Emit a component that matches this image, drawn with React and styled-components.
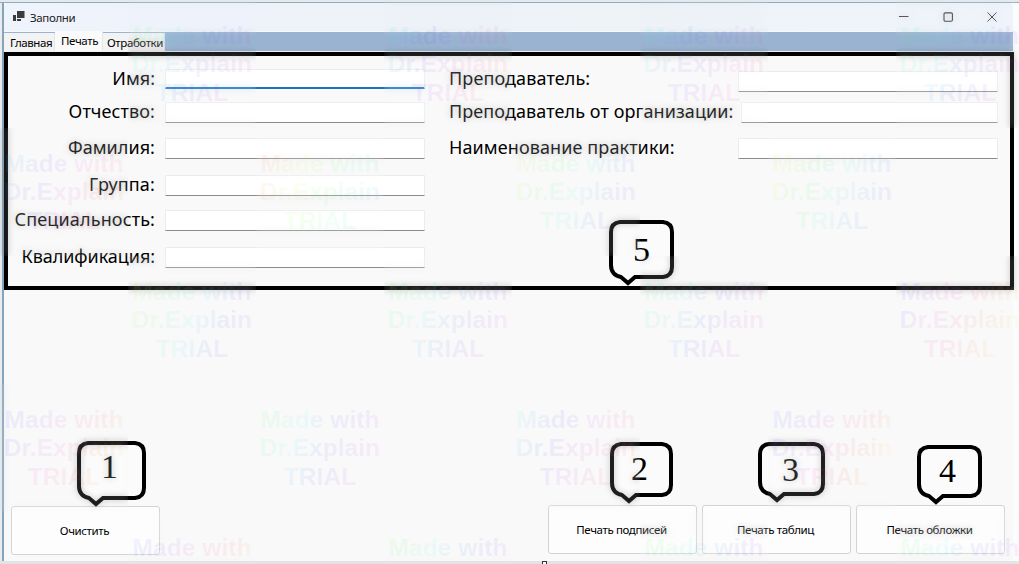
import React from 'react';
import styled, { createGlobalStyle } from 'styled-components';

const GlobalStyle = createGlobalStyle`
  * { box-sizing: border-box; }
  html, body { margin: 0; padding: 0; overflow: hidden; }
`;

const Desktop = styled.div`
  position: relative;
  width: 1019px;
  height: 564px;
  overflow: hidden;
  padding: 3px 6px 0 4px;
  background: linear-gradient(90deg, #e9ebec 0 2px, #86a5bc 2px 4px, #fdfdfd 4px);
  font-family: "Noto Sans", "Open Sans", sans-serif;
  color: #000;
`;

const TopEdge = styled.div`
  position: absolute;
  left: 0;
  top: 0;
  width: 1019px;
  height: 3px;
  background: linear-gradient(180deg, #e6e9eb 0 2px, #8fabc0 2px 3px);
`;

const BottomEdge = styled.div`
  position: absolute;
  left: 0;
  top: 561px;
  width: 1019px;
  height: 3px;
  background: #e3e3e3;
`;

const ResizeHandle = styled.div`
  position: absolute;
  left: 542px;
  top: 561px;
  width: 5px;
  height: 5px;
  border: 1px solid #333;
  background: #fff;
`;

const Window = styled.main`
  display: flex;
  flex-direction: column;
  width: 1009px;
  height: 558px;
  background: #f9f9f9;
  border-radius: 5px 5px 0 0;
  overflow: visible;
`;

const TitleBar = styled.header`
  display: flex;
  align-items: center;
  height: 28px;
  flex: none;
  padding-left: 9px;
  border-radius: 5px 5px 0 0;
  background: linear-gradient(90deg, #eef3fc, #eef3fa 35%, #edf3f7 60%, #eff4fb);
`;

const Title = styled.span`
  font-size: 11.5px;
  line-height: 16px;
  margin: 1px 0 0 5px;
  flex: 1;
  letter-spacing: -0.35px;
  color: #222;
`;

const WindowControls = styled.div`
  display: flex;
  gap: 34px;
  padding-right: 16px;
`;

const TabStrip = styled.nav`
  display: flex;
  align-items: flex-end;
  height: 21px;
  flex: none;
  border-top: 1px solid #f7fafc;
  border-bottom: 1px solid #eef2f6;
  background: #99b3d1;
`;

const Tab = styled.div`
  width: ${(p) => p.$width}px;
  height: ${(p) => (p.$active ? 20 : 18)}px;
  line-height: ${(p) => (p.$active ? 20 : 19)}px;
  padding-left: ${(p) => p.$pad}px;
  font-size: 11.5px;
  letter-spacing: ${(p) => p.$tracking || 0}px;
  white-space: nowrap;
  background: ${(p) => (p.$active ? '#fafafa' : '#f3f3f3')};
  border-right: 1px solid #e4e6e8;
`;

const FormFrame = styled.section`
  display: flex;
  flex: none;
  width: 1010px;
  height: 238px;
  border: 4px solid #000;
  background: #f9f9f9;
`;

const FormColumn = styled.div`
  display: flex;
  flex-direction: column;
  width: ${(p) => p.$width}px;
  padding-left: ${(p) => p.$pad || 0}px;
`;

const FormRow = styled.div`
  display: flex;
  flex: none;
  align-items: flex-start;
  height: 21px;
  margin-top: ${(p) => p.$gap}px;
  justify-content: ${(p) => (p.$spread ? 'space-between' : 'flex-end')};
`;

const Label = styled.label`
  font-size: 18px;
  line-height: 21px;
  margin-top: -1px;
  letter-spacing: ${(p) => p.$tracking || 0}px;
  white-space: nowrap;
`;

const Field = styled.input`
  flex: none;
  width: ${(p) => p.$width}px;
  height: ${(p) => (p.$active ? 20 : 21)}px;
  margin: ${(p) => p.$drop || 0}px 0 0 ${(p) => (p.$tight ? 6 : 10)}px;
  padding: 0 4px;
  outline: none;
  border: 1px solid #ececec;
  border-bottom: ${(p) => (p.$active ? '2px solid #1a73c2' : '1px solid #8a8a8a')};
  border-radius: 1px;
  background: #fff;
`;

const Actions = styled.footer`
  display: flex;
  margin-top: auto;
  padding: 0 8px 6px 7px;
  align-items: flex-end;
`;

const ActionButton = styled.button`
  width: 149px;
  height: 49px;
  padding: 0 2px 0 0;
  margin: 0 ${(p) => p.$after || 0}px ${(p) => p.$lift || 0}px 0;
  border: 1px solid #d3d3d3;
  border-radius: 3px;
  background: #fdfdfd;
  color: #000;
  font: 11.5px/16px "Noto Sans", "Open Sans", sans-serif;
  letter-spacing: -0.38px;
`;

const CalloutBox = styled.div`
  position: absolute;
  left: ${(p) => p.$x}px;
  top: ${(p) => p.$y}px;
  width: ${(p) => p.$w}px;
  height: ${(p) => p.$h}px;
`;

const CalloutShape = styled.svg`
  display: block;
`;

const CalloutNumber = styled.span`
  position: absolute;
  left: ${(p) => p.$x}px;
  top: ${(p) => p.$y}px;
  font: 34px/34px "Liberation Serif", serif;
`;

const Haze = styled.div`
  position: absolute;
  left: ${(p) => p.$x}px;
  top: ${(p) => p.$y}px;
  width: 128px;
  height: 128px;
  backdrop-filter: blur(3px);
  opacity: 0.22;
`;

const Watermark = styled.div`
  position: absolute;
  left: ${(p) => p.$x}px;
  top: ${(p) => p.$y}px;
  width: 128px;
  height: 128px;
  padding-top: 22px;
  text-align: center;
  font: bold 24.6px/28.3px "Liberation Sans", sans-serif;
  white-space: pre-line;
  color: transparent;
  background-image: linear-gradient(
    115deg,
    ${(p) => [0, 45, 90, 135, 180, 225, 270].map((d) => `hsla(${p.$hue + d}, 95%, 62%, 0.08)`).join(', ')}
  );
  background-clip: text;
  pointer-events: none;
`;

function Callout({ x, y, w, h, n, nx, ny }) {
  const b = h - 10;
  return (
    <CalloutBox $x={x} $y={y} $w={w} $h={h}>
      <CalloutShape width={w} height={h} viewBox={`0 0 ${w} ${h}`}>
        <path
          d={`M11 2H${w - 11}Q${w - 2} 3 ${w - 2} 12V${b - 10}Q${w - 2} ${b - 1} ${w - 11} ${b}H26L19 ${h - 4}L12 ${b}Q2 ${b - 2} 2 ${b - 12}V12Q2 3 11 2Z`}
          fill="#fbfbfb"
          stroke="#000"
          strokeWidth="4"
        />
      </CalloutShape>
      <CalloutNumber $x={nx} $y={ny}>{n}</CalloutNumber>
    </CalloutBox>
  );
}

const callouts = [
  { n: 1, x: 77, y: 441, w: 69, h: 67, nx: 24, ny: 9 },
  { n: 2, x: 610, y: 442, w: 63, h: 63, nx: 21, ny: 10 },
  { n: 3, x: 758, y: 442, w: 67, h: 62, nx: 24, ny: 11 },
  { n: 4, x: 917, y: 445, w: 65, h: 61, nx: 22, ny: 9 },
  { n: 5, x: 609, y: 220, w: 65, h: 67, nx: 24, ny: 13 },
];

const marks = [
  [128, 0, 90], [384, 0, 150], [640, 0, 130], [896, 0, 90],
  [0, 128, 160], [256, 128, -20], [512, 128, 40], [768, 128, 30],
  [128, 256, 50], [384, 256, 80], [640, 256, 100], [896, 256, 205],
  [0, 384, 190], [256, 384, 90], [512, 384, 150], [768, 384, 190],
  [128, 512, 190], [384, 512, 80], [640, 512, 80], [896, 512, 90],
];

export default function App() {
  return (
    <>
      <GlobalStyle />
      <Desktop>
        <TopEdge />
        <Window>
          <TitleBar>
            <svg width="12" height="12" viewBox="0 0 12 12">
              <path d="M4 0H11.5V7H4ZM0 4H3V10H0ZM4 8H8V10H4Z" fill="#3c3c3c" />
            </svg>
            <Title>Заполни</Title>
            <WindowControls>
              <svg width="10" height="10" viewBox="0 0 10 10"><path d="M0 4.5H9.5" stroke="#333" /></svg>
              <svg width="10" height="10" viewBox="0 0 10 10"><rect x="1" y=".9" width="8.4" height="8.4" rx="1.2" fill="none" stroke="#333" strokeWidth="1.1" /></svg>
              <svg width="10" height="10" viewBox="0 0 10 10"><path d="M.5 .5L9.5 9.5M9.5 .5L.5 9.5" stroke="#333" /></svg>
            </WindowControls>
          </TitleBar>
          <TabStrip>
            <Tab $width={51} $pad={6} $tracking={-0.45}>Главная</Tab>
            <Tab $width={48} $pad={6} $tracking={-0.35} $active>Печать</Tab>
            <Tab $width={62} $pad={4} $tracking={-0.4}>Отработки</Tab>
          </TabStrip>
          <FormFrame>
            <FormColumn $width={417}>
              <FormRow $gap={13}><Label>Имя:</Label><Field $width={260} $active /></FormRow>
              <FormRow $gap={12}><Label $tracking={0.1}>Отчество:</Label><Field $width={260} /></FormRow>
              <FormRow $gap={15}><Label $tracking={0.05}>Фамилия:</Label><Field $width={260} /></FormRow>
              <FormRow $gap={16}><Label $tracking={0.15}>Группа:</Label><Field $width={260} /></FormRow>
              <FormRow $gap={14}><Label $tracking={0.15}>Специальность:</Label><Field $width={260} /></FormRow>
              <FormRow $gap={16}><Label $tracking={-0.05}>Квалификация:</Label><Field $width={260} /></FormRow>
            </FormColumn>
            <FormColumn $width={573} $pad={24}>
              <FormRow $gap={13} $spread><Label $tracking={0.12}>Преподаватель:</Label><Field $width={260} $drop={2} /></FormRow>
              <FormRow $gap={12} $spread><Label $tracking={0.09}>Преподаватель от организации:</Label><Field $width={257} $tight /></FormRow>
              <FormRow $gap={15} $spread><Label $tracking={0.1}>Наименование практики:</Label><Field $width={260} /></FormRow>
            </FormColumn>
          </FormFrame>
          <Actions>
            <ActionButton $after={388}>Очистить</ActionButton>
            <ActionButton $after={5} $lift={1}>Печать подписей</ActionButton>
            <ActionButton $after={5} $lift={1}>Печать таблиц</ActionButton>
            <ActionButton $lift={1}>Печать обложки</ActionButton>
          </Actions>
        </Window>
        <BottomEdge />
        <ResizeHandle />
        {callouts.map((c) => <Callout key={c.n} {...c} />)}
        {marks.map(([x, y]) => <Haze key={`h${x}-${y}`} $x={x} $y={y} />)}
        {marks.map(([x, y, hue]) => (
          <Watermark key={`w${x}-${y}`} $x={x} $y={y} $hue={hue}>{y < 512 ? 'Made with\nDr.Explain\nTRIAL' : 'Made with'}</Watermark>
        ))}
      </Desktop>
    </>
  );
}
